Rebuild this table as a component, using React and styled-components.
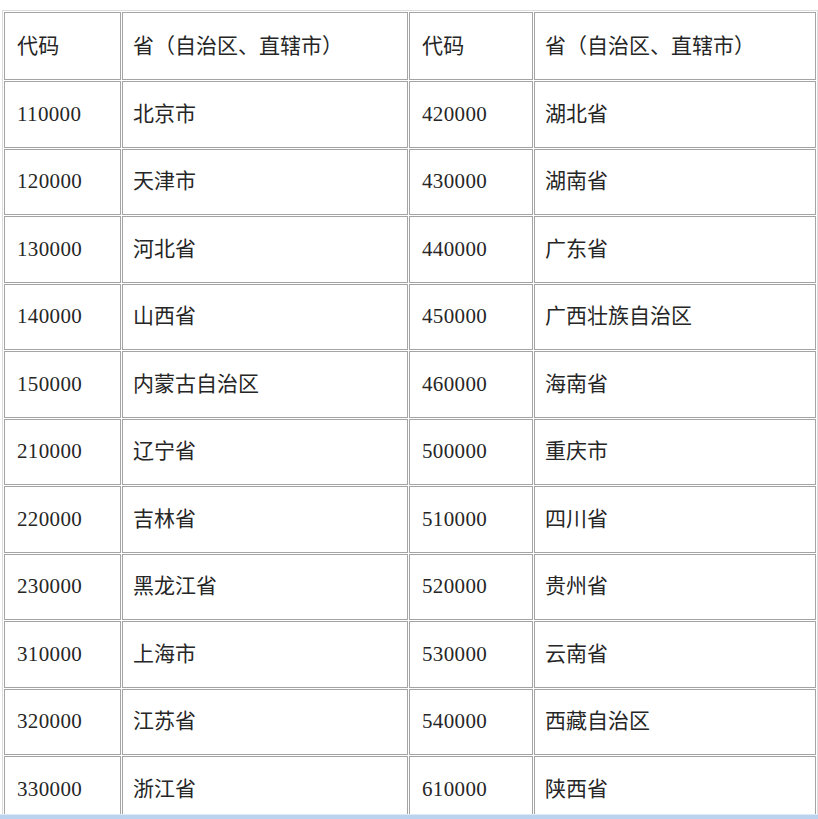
import React from 'react';
import styled, { createGlobalStyle } from 'styled-components';

const rows = [
  ['110000', '北京市', '420000', '湖北省'],
  ['120000', '天津市', '430000', '湖南省'],
  ['130000', '河北省', '440000', '广东省'],
  ['140000', '山西省', '450000', '广西壮族自治区'],
  ['150000', '内蒙古自治区', '460000', '海南省'],
  ['210000', '辽宁省', '500000', '重庆市'],
  ['220000', '吉林省', '510000', '四川省'],
  ['230000', '黑龙江省', '520000', '贵州省'],
  ['310000', '上海市', '530000', '云南省'],
  ['320000', '江苏省', '540000', '西藏自治区'],
  ['330000', '浙江省', '610000', '陕西省'],
];

const Global = createGlobalStyle`
  html, body {
    margin: 0;
    background: #fff;
    overflow: hidden;
    height: 819px;
  }
  body {
    padding: 10px 0 0 2px;
    font-family: "Liberation Serif", "Noto Sans CJK SC", serif;
  }
`;

const Table = styled.table`
  border-collapse: separate;
  border-spacing: 1px;
  border: 1px solid #dcdcdc;
  table-layout: fixed;
  width: 816px;
  color: #262626;
  font-size: 21px;
`;

const Col = styled.col`
  width: ${(p) => p.w}px;
`;

const Row = styled.tr`
  height: ${(p) => (p.head ? 68 : 66.5)}px;
`;

const Cell = styled.td`
  box-sizing: border-box;
  border: 1px solid #a4a4a4;
  padding: 0 0 0 ${(p) => (p.num ? 12 : 10)}px;
  vertical-align: middle;
  white-space: nowrap;
  font-weight: 400;
  line-height: 1;
  letter-spacing: ${(p) => (p.num ? '0.35px' : '0')};
`;

const Frame = styled.div`
  position: fixed;
  left: 0;
  right: 0;
  bottom: 0;
  height: 4px;
  background: #bcd3ef;
  border-top: 1px solid #dde9f7;
`;

export default function App() {
  return (
    <>
      <Global />
      <Table>
        <colgroup>
          <Col w={117} />
          <Col w={286} />
          <Col w={124} />
          <Col w={282} />
        </colgroup>
        <tbody>
          <Row head>
            <Cell num>代码</Cell>
            <Cell>省（自治区、直辖市）</Cell>
            <Cell num>代码</Cell>
            <Cell>省（自治区、直辖市）</Cell>
          </Row>
          {rows.map((r) => (
            <Row key={r[0]}>
              {r.map((c, i) => (
                <Cell key={i} num={i % 2 === 0}>
                  {c}
                </Cell>
              ))}
            </Row>
          ))}
        </tbody>
      </Table>
      <Frame />
    </>
  );
}
